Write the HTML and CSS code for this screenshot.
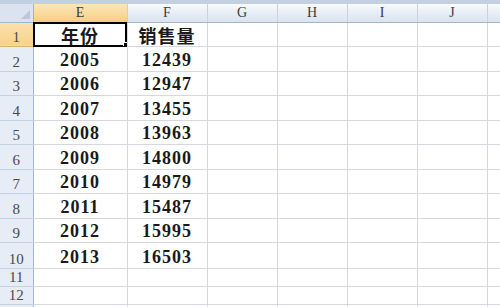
FILE: index.html
```html
<!DOCTYPE html>
<html lang="zh-CN">
<head>
    <meta charset="UTF-8">
    <meta name="viewport" content="width=device-width, initial-scale=1.0">
    <title>Sheet1</title>
    <link rel="stylesheet" href="styles.css">
</head>
<body>
    <div class="sheet">
        <div class="top-band"></div>
        <table class="grid">
            <colgroup>
                <col class="w-head">
                <col class="w-e">
                <col class="w-f">
                <col class="w-std">
                <col class="w-std">
                <col class="w-std">
                <col class="w-std">
                <col class="w-rest">
            </colgroup>
            <thead>
                <tr>
                    <th class="corner"><span class="corner-mark"></span></th>
                    <th class="col-head active">E</th>
                    <th class="col-head">F</th>
                    <th class="col-head">G</th>
                    <th class="col-head">H</th>
                    <th class="col-head">I</th>
                    <th class="col-head">J</th>
                    <th class="col-head"></th>
                </tr>
            </thead>
            <tbody>
                <tr class="row-tall">
                    <th class="row-head active">1</th>
                    <td class="cell title selected">年份<span class="fill-handle"></span></td>
                    <td class="cell title">销售量</td>
                    <td></td><td></td><td></td><td></td><td></td>
                </tr>
                <tr class="row-tall">
                    <th class="row-head">2</th>
                    <td class="cell">2005</td><td class="cell">12439</td>
                    <td></td><td></td><td></td><td></td><td></td>
                </tr>
                <tr class="row-tall">
                    <th class="row-head">3</th>
                    <td class="cell">2006</td><td class="cell">12947</td>
                    <td></td><td></td><td></td><td></td><td></td>
                </tr>
                <tr class="row-tall">
                    <th class="row-head">4</th>
                    <td class="cell">2007</td><td class="cell">13455</td>
                    <td></td><td></td><td></td><td></td><td></td>
                </tr>
                <tr class="row-tall">
                    <th class="row-head">5</th>
                    <td class="cell">2008</td><td class="cell">13963</td>
                    <td></td><td></td><td></td><td></td><td></td>
                </tr>
                <tr class="row-tall">
                    <th class="row-head">6</th>
                    <td class="cell">2009</td><td class="cell">14800</td>
                    <td></td><td></td><td></td><td></td><td></td>
                </tr>
                <tr class="row-tall">
                    <th class="row-head">7</th>
                    <td class="cell">2010</td><td class="cell">14979</td>
                    <td></td><td></td><td></td><td></td><td></td>
                </tr>
                <tr class="row-tall">
                    <th class="row-head">8</th>
                    <td class="cell">2011</td><td class="cell">15487</td>
                    <td></td><td></td><td></td><td></td><td></td>
                </tr>
                <tr class="row-tall">
                    <th class="row-head">9</th>
                    <td class="cell">2012</td><td class="cell">15995</td>
                    <td></td><td></td><td></td><td></td><td></td>
                </tr>
                <tr class="row-last">
                    <th class="row-head">10</th>
                    <td class="cell">2013</td><td class="cell">16503</td>
                    <td></td><td></td><td></td><td></td><td></td>
                </tr>
                <tr class="row-short">
                    <th class="row-head">11</th>
                    <td></td><td></td><td></td><td></td><td></td><td></td><td></td>
                </tr>
                <tr class="row-short">
                    <th class="row-head">12</th>
                    <td></td><td></td><td></td><td></td><td></td><td></td><td></td>
                </tr>
                <tr class="row-short">
                    <th class="row-head">13</th>
                    <td></td><td></td><td></td><td></td><td></td><td></td><td></td>
                </tr>
            </tbody>
        </table>
    </div>
</body>
</html>
```

FILE: styles.css
```css
body {
    margin: 0;
    padding: 0;
    background: #fff;
    overflow: hidden;
}

.sheet {
    width: 500px;
    height: 307px;
    overflow: hidden;
}

.top-band {
    height: 4px;
    background: #c2d0e2;
}

.grid {
    border-collapse: collapse;
    table-layout: fixed;
    width: 500px;
}

.w-head { width: 33px; }
.w-e { width: 94px; }
.w-f { width: 80px; }
.w-std { width: 70px; }
.w-rest { width: 13px; }

.grid td,
.grid th {
    padding: 0;
    border-right: 1px solid #d5d9df;
    border-bottom: 1px solid #d5d9df;
    overflow: hidden;
    white-space: nowrap;
}

/* column headers */
.grid thead tr {
    height: 18px;
}

.col-head {
    font-family: "Liberation Serif", serif;
    font-weight: normal;
    font-size: 14px;
    color: #3c3c3c;
    text-align: center;
    line-height: 16px;
    background: linear-gradient(#f8fafd, #e4ebf4 60%, #dbe3ee);
    border-right-color: #c5d2e2 !important;
    border-bottom: 1px solid #9eb6ce !important;
}

.col-head.active {
    background: linear-gradient(#fbe4b8, #f9d99a 60%, #f5cc80);
    border-bottom-color: #c9a35c !important;
}

.corner {
    position: relative;
    background: #dae3ef;
    border-right: 1px solid #9eb6ce !important;
    border-bottom: 1px solid #9eb6ce !important;
}

.corner-mark {
    position: absolute;
    right: 3px;
    bottom: 3px;
    width: 0;
    height: 0;
    border-left: 9px solid transparent;
    border-bottom: 9px solid #b8c8dc;
}

/* row headers */
.row-head {
    font-family: "Liberation Serif", serif;
    font-weight: normal;
    font-size: 15px;
    color: #4a4a4a;
    text-align: center;
    vertical-align: bottom;
    line-height: 16px;
    padding-bottom: 1px !important;
    background: #e6edf6;
    border-right: 1px solid #9eb6ce !important;
    border-bottom: 1px solid #c5d2e2 !important;
}

.row-head.active {
    background: linear-gradient(#fbe0ad, #f8d28a);
    border-bottom-color: #d8b472 !important;
}

.row-tall { height: 24.5px; }
.row-last { height: 26px; }
.row-short { height: 17px; }

/* data cells */
.cell {
    position: relative;
    font-family: "Liberation Serif", serif;
    font-weight: bold;
    font-size: 18px;
    letter-spacing: 1px;
    color: #1a1a1a;
    text-align: center;
    vertical-align: bottom;
    line-height: 20px;
    padding-bottom: 1px !important;
}

.cell.title {
    font-family: "Noto Sans CJK SC", sans-serif;
    font-size: 18px;
    letter-spacing: 1px;
    line-height: 22px;
    padding-bottom: 0 !important;
}

.cell.selected {
    outline: 2px solid #000;
    outline-offset: -2px;
}

.fill-handle {
    position: absolute;
    right: -3px;
    bottom: -3px;
    width: 5px;
    height: 5px;
    background: #000;
    border: 1px solid #fff;
    z-index: 2;
}
```
